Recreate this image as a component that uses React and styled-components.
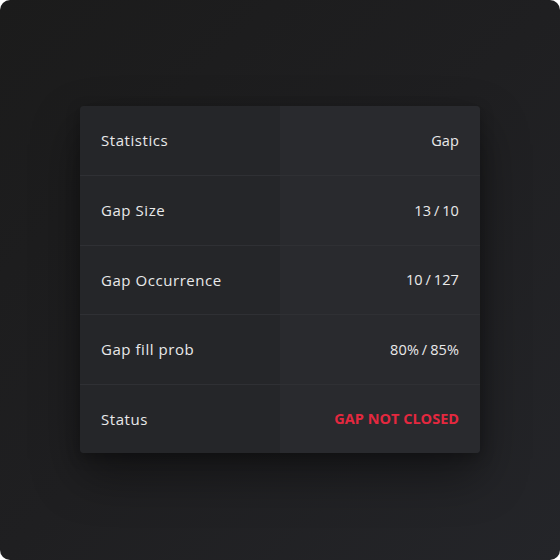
import React from "react";
import styled, { createGlobalStyle } from "styled-components";

const Global = createGlobalStyle`
  html, body { margin: 0; padding: 0; background: #ffffff; }
  body { font-family: "Open Sans", "Noto Sans", sans-serif; }
`;

const Stage = styled.div`
  width: 560px;
  height: 560px;
  border-radius: 10px;
  background: linear-gradient(135deg, #1b1b1b 0%, #1f1f21 50%, #242529 100%);
  display: flex;
  align-items: center;
  justify-content: center;
  overflow: hidden;
`;

const Card = styled.div`
  width: 400px;
  margin-top: -1px;
  border-radius: 4px;
  overflow: hidden;
  display: grid;
  grid-template-columns: 200px 200px;
  background: linear-gradient(90deg, #252629 0 200px, #292a2e 200px 400px);
  box-shadow: 0 22px 48px rgba(0, 0, 0, 0.4), 0 4px 14px rgba(0, 0, 0, 0.25);
`;

const Row = styled.div`
  display: contents;
`;

const Cell = styled.div`
  height: 69.5px;
  box-sizing: border-box;
  display: flex;
  align-items: center;
  justify-content: flex-start;
  padding: 0 0 1px 21px;
  border-top: ${(p) => (p.$first ? "none" : "1px solid #2f3034")};
  font-size: 15px;
  font-weight: 500;
  letter-spacing: 0.55px;
  color: #e9e9ea;
`;

const ValueCell = styled(Cell)`
  justify-content: flex-end;
  padding: 0 21px 1px 0;
  font-size: 14.5px;
  font-weight: ${(p) => (p.$alert ? 700 : 500)};
  letter-spacing: ${(p) => (p.$alert ? "0" : "0.1px")};
  word-spacing: ${(p) => (p.$alert ? "0" : "-1px")};
  color: ${(p) => (p.$alert ? "#e4283f" : "#e9e9ea")};
`;

const rows = [
  ["Statistics", "Gap"],
  ["Gap Size", "13 / 10"],
  ["Gap Occurrence", "10 / 127"],
  ["Gap fill prob", "80% / 85%"],
  ["Status", "GAP NOT CLOSED", true],
];

export default function App() {
  return (
    <>
      <Global />
      <Stage>
        <Card>
          {rows.map(([label, value, alert], i) => (
            <Row key={label}>
              <Cell $first={i === 0}>{label}</Cell>
              <ValueCell $first={i === 0} $alert={alert}>
                {value}
              </ValueCell>
            </Row>
          ))}
        </Card>
      </Stage>
    </>
  );
}
